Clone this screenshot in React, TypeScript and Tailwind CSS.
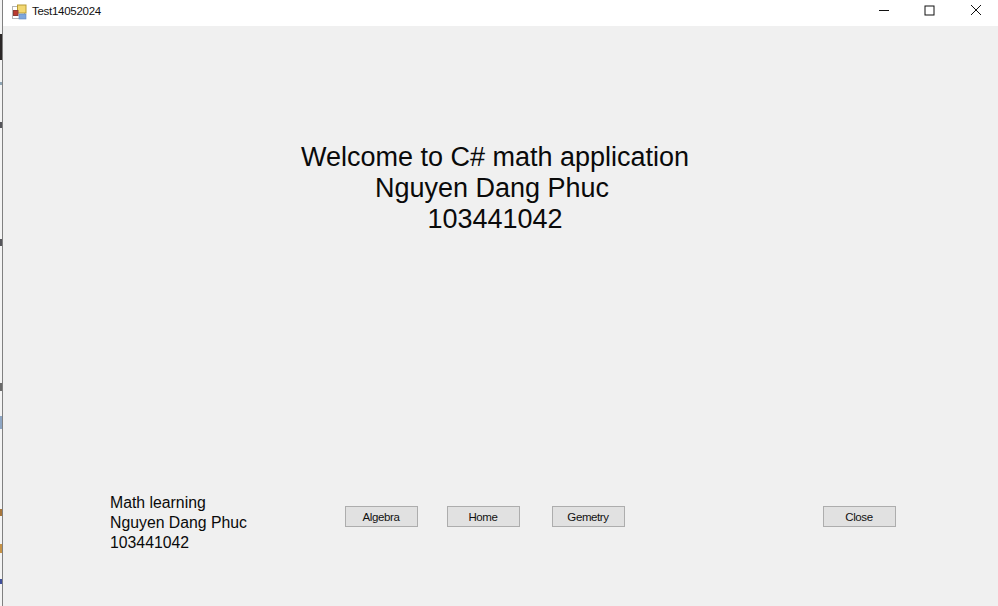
const WinButton = ({ label, className }: { label: string; className: string }) => (
  <button className={`h-[21px] w-[73px] shrink-0 border border-[#adadad] bg-[#e1e1e1] pr-px pt-px text-[11.5px] leading-[19px] tracking-[-0.4px] text-[#111] ${className}`}>
    {label}
  </button>
);

const LogoIcon = () => (
  <svg width="16" height="16" viewBox="0 0 16 16" className="shrink-0">
    <rect x="0.5" y="2.5" width="12" height="12" fill="#fff" stroke="#b5b5b5" />
    <rect x="5.5" y="1" width="8.5" height="8" fill="#f3d872" stroke="#b89b35" />
    <rect x="1.5" y="6.5" width="4.5" height="5" fill="#bb3a30" stroke="#8d3a34" />
    <rect x="7" y="10" width="7" height="5" fill="#7ea6dc" stroke="#5f88bf" strokeWidth="0.6" />
  </svg>
);

const TitleBar = () => (
  <div className="flex h-[26px] items-center bg-white">
    <div className="flex items-center gap-[4px] pb-[3px] pl-[9px]">
      <LogoIcon />
      <span className="text-[11.5px] tracking-[-0.28px] text-[#111]">Test14052024</span>
    </div>
    <div className="ml-auto flex items-center gap-[35px] pb-[6px] pr-[16px]">
      <svg width="10" height="11" viewBox="0 0 10 11">
        <path d="M0 5.5H10" stroke="#111" strokeWidth="1" />
      </svg>
      <svg width="11" height="11" viewBox="0 0 11 11">
        <rect x="1" y="1" width="9" height="9" fill="none" stroke="#111" strokeWidth="1" />
      </svg>
      <svg width="12" height="12" viewBox="0 0 12 12">
        <path d="M1 1L11 11M11 1L1 11" stroke="#111" strokeWidth="1" />
      </svg>
    </div>
  </div>
);

export default function App() {
  return (
    <div className="flex h-[606px] w-[998px] overflow-hidden bg-white font-['Liberation_Sans',Arial,sans-serif]">
      {/* sliver of the window behind */}
      <div className="flex w-[2px] shrink-0 flex-col bg-[#f4f4f4]">
        <div className="mt-[34px] h-[26px] bg-[#2b2727]" />
        <div className="mt-[22px] h-[3px] bg-[#8fa6b5]" />
        <div className="mt-[37px] h-[6px] bg-[#55555a]" />
        <div className="mt-[111px] h-[7px] bg-[#55555a]" />
        <div className="mt-[137px] h-[8px] bg-[#6a6a6a]" />
        <div className="mt-[25px] h-[13px] bg-[#8ea6c4]" />
        <div className="mt-[80px] h-[7px] bg-[#a8763a]" />
        <div className="mt-[28px] h-[9px] bg-[#c79346]" />
        <div className="mt-[26px] h-[5px] bg-[#3f4f9a]" />
      </div>
      <div className="w-px shrink-0 bg-[#808080]" />
      <div className="flex min-w-0 flex-1 flex-col">
        <TitleBar />
        <div className="flex flex-1 flex-col bg-[#f0f0f0]">
          <div className="mr-[11px] pt-[116px] text-center text-[27px] leading-[31px] text-[#0a0a0a]">
            <p>Welcome to C# math application</p>
            <p className="pr-[6px]">Nguyen Dang Phuc</p>
            <p>103441042</p>
          </div>
          <div className="mt-[258px] flex items-start pl-[107px]">
            <div className="w-[235px] text-[15.8px] leading-[20px] text-[#0a0a0a]">
              <p>Math learning</p>
              <p>Nguyen Dang Phuc</p>
              <p>103441042</p>
            </div>
            <div className="mt-[13px] flex">
              <WinButton label="Algebra" className="" />
              <WinButton label="Home" className="ml-[29px]" />
              <WinButton label="Gemetry" className="ml-[32px]" />
              <WinButton label="Close" className="ml-[198px]" />
            </div>
          </div>
        </div>
      </div>
    </div>
  );
}
